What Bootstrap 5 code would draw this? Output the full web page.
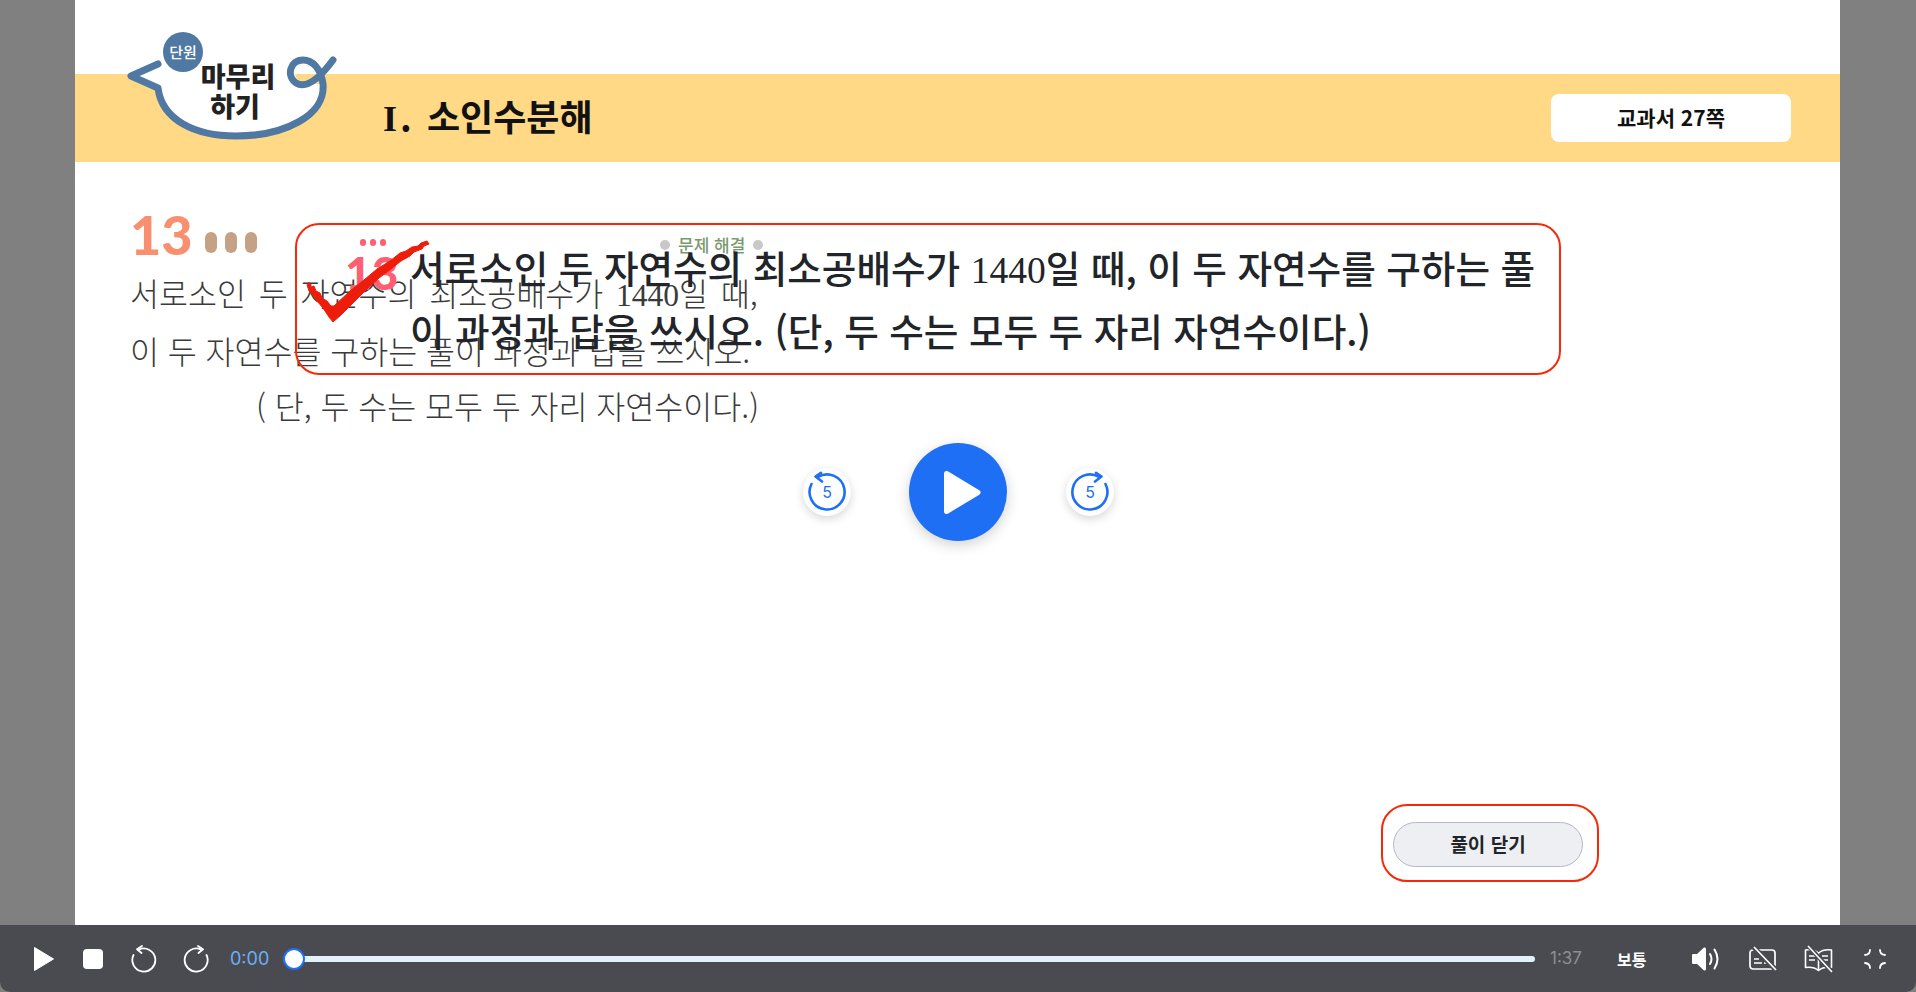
<!DOCTYPE html>
<html lang="ko">
<head>
    <meta charset="UTF-8">
    <meta name="viewport" content="width=device-width, initial-scale=1.0">
    <title>단원 마무리하기</title>
    <link href="https://cdn.jsdelivr.net/npm/bootstrap@5.3.0/dist/css/bootstrap.min.css" rel="stylesheet">
    <style>
        html, body { height: 100%; }
        body {
            background-color: #808080;
            font-family: "Noto Sans CJK KR", "Noto Sans", sans-serif;
            overflow: hidden;
        }
        .player { height: 992px; }
        .slide {
            width: 1765px;
            height: 925px;
            margin-left: 75px;
            background-color: #fff;
            padding-top: 74px;
        }
        .unit-band {
            height: 88px;
            background-color: #ffd985;
            padding-left: 308px;
            padding-right: 49px;
        }
        .unit-title {
            font-size: 36px;
            font-weight: 700;
            color: #111;
            margin: 0;
        }
        .unit-title .roman { font-family: "Liberation Serif", serif; margin-right: -7px; }
        .unit-title .dot-mark { margin-right: 5px; }
        .page-tag {
            width: 240px;
            height: 48px;
            border-radius: 8px;
            background-color: #fff;
            font-size: 21px;
            font-weight: 700;
            color: #111;
        }
        .logo-art { position: absolute; left: 45px; top: 15px; }
        .book-part { padding: 51px 0 0 55px; }
        .book-num {
            font-family: "Lato", sans-serif;
            font-size: 54px;
            font-weight: 900;
            line-height: 44px;
            color: #f89070;
        }
        .book-dot {
            width: 12px;
            height: 21px;
            border-radius: 6px;
            background-color: #c5a285;
        }
        .book-line {
            font-size: 31.5px;
            font-weight: 300;
            color: #3a3a3a;
            line-height: 55px;
            white-space: nowrap;
        }
        .book-lines { margin-top: 8px; }
        .book-line .num { font-family: "Liberation Serif", serif; }
        .book-line.wide { word-spacing: 4px; }
        .book-line.last { padding-left: 126px; }
        .read-box {
            position: absolute;
            left: 220px;
            top: 223px;
            width: 1266px;
            height: 152px;
            border: 2px solid #f5290a;
            border-radius: 24px;
            padding: 12px 0 0 113px;
            font-size: 37.6px;
            font-weight: 500;
            line-height: 59px;
            color: #212529;
            white-space: nowrap;
        }
        .read-box .num { font-family: "Liberation Serif", serif; }
        .mini-num {
            position: absolute;
            left: 270px;
            top: 250px;
            font-family: "Lato", sans-serif;
            font-size: 46px;
            font-weight: 900;
            line-height: 46px;
            color: #ff5f72;
        }
        .mini-dots { position: absolute; left: 285px; top: 239px; }
        .mini-dots i {
            display: block;
            width: 6px;
            height: 7px;
            border-radius: 3px;
            background-color: #ff5f72;
        }
        .skill-tag {
            position: absolute;
            left: 585px;
            top: 232px;
            font-size: 17px;
            font-weight: 500;
            color: #7b9a6c;
        }
        .skill-tag i {
            display: block;
            width: 10px;
            height: 10px;
            border-radius: 50%;
            background-color: #c8c8c8;
        }
        .check-art { position: absolute; left: 225px; top: 235px; }
        .skip-btn {
            position: absolute;
            width: 48px;
            height: 48px;
            top: 468px;
            border-radius: 50%;
            background-color: #fff;
            box-shadow: 0 3px 10px rgba(0,0,0,.16);
        }
        .skip-back { left: 728px; }
        .skip-next { left: 991px; }
        .play-big {
            position: absolute;
            left: 834px;
            top: 443px;
            width: 98px;
            height: 98px;
            padding-left: 8px;
            border-radius: 50%;
            background-color: #1f6ff5;
            box-shadow: 0 4px 14px rgba(0,0,0,.18);
        }
        .close-frame {
            position: absolute;
            left: 1306px;
            top: 804px;
            width: 218px;
            height: 78px;
            padding: 2px 4px 0 0;
            border: 2px solid #f5290a;
            border-radius: 26px;
        }
        .close-solution {
            width: 190px;
            height: 45px;
            padding: 0;
            border: 1px solid #b4b8c5;
            background-color: #eeeff2;
            color: #212529;
            font-size: 19px;
            font-weight: 700;
        }
        .ctrl-bar {
            height: 67px;
            background-color: #4a4b50;
            border-radius: 0 0 10px 10px;
            padding: 0 30px 0 33px;
            color: #fff;
        }
        .time-now { color: #6bb0f5; font-size: 18px; width: 38px; margin-left: 21px; font-family: "Inter", sans-serif; }
        .time-end { color: #8c8f95; font-size: 17px; width: 32px; margin-left: 15px; font-family: "Inter", sans-serif; }
        .seek-wrap { height: 24px; margin-left: 15px; }
        .seek-track { height: 6px; background-color: #e3f1fd; border-radius: 3px; }
        .seek-thumb {
            position: absolute;
            left: 0;
            top: 1px;
            width: 22px;
            height: 22px;
            border-radius: 50%;
            background-color: #fff;
            border: 2px solid #1f6ff5;
        }
        .speed-label { font-size: 16px; font-weight: 700; margin-left: 35px; width: 33px; white-space: nowrap; }
        .ctrl-icon { display: block; }
    </style>
</head>
<body>
    <div class="player d-flex flex-column">
        <div class="slide position-relative">
            <div class="unit-band d-flex align-items-center justify-content-between">
                <h1 class="unit-title"><span class="roman">I</span> <span class="dot-mark">.</span> 소인수분해</h1>
                <div class="page-tag d-flex align-items-center justify-content-center">교과서 27쪽</div>
            </div>

            <!-- speech bubble logo -->
            <svg class="logo-art" width="225" height="130" viewBox="120 15 225 130">
                <path d="M160 65 C200 45 270 45 300 62 C290 72 296 84 308 84 L322 84 C325 115 285 137 236 137 C195 137 162 120 158 90 L132 77 Z" fill="#fff"/>
                <path d="M158 64 L131 76 L158 88 C162 120 195 136 236 136 C285 136 326 115 323 84 C321 68 312 60 303 60 C290 60 286 76 296 83 C308 90 322 75 333 60" fill="none" stroke="#4f78a3" stroke-width="7" stroke-linecap="round" stroke-linejoin="round"/>
                <circle cx="183" cy="52" r="20" fill="#4f78a3"/>
                <text x="183" y="58" text-anchor="middle" font-size="15" font-weight="500" fill="#fff" font-family="Noto Sans CJK KR, sans-serif">단원</text>
                <text x="238" y="87" text-anchor="middle" font-size="27" font-weight="900" fill="#222" font-family="Noto Sans CJK KR, sans-serif">마무리</text>
                <text x="235" y="117" text-anchor="middle" font-size="27" font-weight="900" fill="#222" font-family="Noto Sans CJK KR, sans-serif">하기</text>
            </svg>

            <div class="book-part">
                <div class="d-flex align-items-end gap-1">
                    <span class="book-num">13</span>
                    <span class="d-flex gap-2 ms-2 mb-1">
                        <span class="book-dot"></span>
                        <span class="book-dot"></span>
                        <span class="book-dot"></span>
                    </span>
                </div>
                <div class="book-lines">
                    <div class="book-line wide">서로소인 두 자연수의 최소공배수가 <span class="num">1440</span>일 때,</div>
                    <div class="book-line">이 두 자연수를 구하는 풀이 과정과 답을 쓰시오.</div>
                    <div class="book-line last">( 단, 두 수는 모두 두 자리 자연수이다.)</div>
                </div>
            </div>

            <div class="mini-dots d-flex gap-1"><i></i><i></i><i></i></div>
            <div class="mini-num">13</div>
            <div class="skill-tag d-flex align-items-center gap-2"><i></i>문제 해결<i></i></div>
            <div class="read-box">
                서로소인 두 자연수의 최소공배수가 <span class="num">1440</span>일 때, 이 두 자연수를 구하는 풀<br>
                이 과정과 답을 쓰시오. (단, 두 수는 모두 두 자리 자연수이다.)
            </div>

            <!-- rough hand drawn check -->
            <svg class="check-art" width="210" height="95" viewBox="0 0 210 95">
                <path d="M7 50 L9 47 L11 52 L14 51 L16 56 L20 58 L22 63 L27 66 L31 71 L34 71 L50 56 L64 45 L77 34 L90 26 L100 18 L106 16 L112 12 L118 11 L121 8 L127 6 L129 9 L124 11 L122 14 L114 17 L110 21 L101 26 L91 34 L79 43 L67 54 L54 67 L41 80 L33 87 L29 82 L23 73 L17 66 L13 60 L9 56 Z" fill="#ee1c0a" stroke="#ee1c0a"/>
            </svg>

            <div class="skip-btn skip-back d-flex align-items-center justify-content-center">
                <svg width="40" height="42" viewBox="-1 -1 40 42">
                    <path d="M10 5 A17.5 17.5 0 1 1 3.5 12" fill="none" stroke="#1f6ff5" stroke-width="2.6" stroke-linecap="round"/>
                    <path d="M13 0.8 L7.5 4.5 L14 9.5" fill="none" stroke="#1f6ff5" stroke-width="2.6" stroke-linecap="round" stroke-linejoin="round"/>
                    <text x="19" y="26" text-anchor="middle" font-size="16" fill="#1f6ff5" font-family="Inter, sans-serif">5</text>
                </svg>
            </div>
            <div class="play-big d-flex align-items-center justify-content-center">
                <svg width="38" height="45" viewBox="0 0 38 45"><path d="M3.5 3.5 L35 22.5 L3.5 41.5 Z" fill="#fff" stroke="#fff" stroke-width="5" stroke-linejoin="round"/></svg>
            </div>
            <div class="skip-btn skip-next d-flex align-items-center justify-content-center">
                <svg width="40" height="42" viewBox="-1 -1 40 42">
                    <path d="M28 5 A17.5 17.5 0 1 0 34.5 12" fill="none" stroke="#1f6ff5" stroke-width="2.6" stroke-linecap="round"/>
                    <path d="M25 0.8 L30.5 4.5 L24 9.5" fill="none" stroke="#1f6ff5" stroke-width="2.6" stroke-linecap="round" stroke-linejoin="round"/>
                    <text x="19" y="26" text-anchor="middle" font-size="16" fill="#1f6ff5" font-family="Inter, sans-serif">5</text>
                </svg>
            </div>

            <div class="close-frame d-flex align-items-center justify-content-center">
                <button type="button" class="btn close-solution rounded-pill">풀이 닫기</button>
            </div>
        </div>

        <div class="ctrl-bar d-flex align-items-center">
            <svg class="ctrl-icon" width="22" height="26" viewBox="0 0 22 26"><path d="M1.5 1.5 L20.5 13 L1.5 24.5 Z" fill="#fff" stroke="#fff" stroke-linejoin="round"/></svg>
            <svg class="ctrl-icon" style="margin-left:28px" width="20" height="20" viewBox="0 0 20 20"><rect width="20" height="20" rx="4" fill="#fff"/></svg>
            <svg class="ctrl-icon" style="margin-left:28px" width="26" height="28" viewBox="0 0 26 28"><path d="M8 4.6 A11.5 11.5 0 1 1 2.5 10" fill="none" stroke="#fff" stroke-width="1.8" stroke-linecap="round"/><path d="M11 1 L6 4.2 L10.5 8" fill="none" stroke="#fff" stroke-width="1.8" stroke-linecap="round" stroke-linejoin="round"/></svg>
            <svg class="ctrl-icon" style="margin-left:26px" width="26" height="28" viewBox="0 0 26 28"><path d="M18 4.6 A11.5 11.5 0 1 0 23.5 10" fill="none" stroke="#fff" stroke-width="1.8" stroke-linecap="round"/><path d="M15 1 L20 4.2 L15.5 8" fill="none" stroke="#fff" stroke-width="1.8" stroke-linecap="round" stroke-linejoin="round"/></svg>
            <span class="time-now">0:00</span>
            <div class="seek-wrap position-relative flex-grow-1 d-flex align-items-center">
                <div class="seek-track w-100"></div>
                <div class="seek-thumb"></div>
            </div>
            <span class="time-end">1:37</span>
            <span class="speed-label">보통</span>
            <svg class="ctrl-icon" style="margin-left:41px" width="29" height="26" viewBox="0 0 29 26"><path d="M1 9 Q1 8 2 8 L6 8 L13 1.5 Q15 1 15 3 L15 23 Q15 25 13 24.5 L6 18 L2 18 Q1 18 1 17 Z" fill="#fff"/><path d="M19 8 Q22 13 19 18" fill="none" stroke="#fff" stroke-width="2" stroke-linecap="round"/><path d="M23.5 3.5 Q29.5 13 23.5 22.5" fill="none" stroke="#fff" stroke-width="2" stroke-linecap="round"/></svg>
            <svg class="ctrl-icon" style="margin-left:29px" width="28" height="26" viewBox="0 0 28 26"><rect x="1" y="4" width="25" height="19" rx="3" fill="none" stroke="#fff" stroke-width="1.7"/><path d="M5 13 H10 M5 17 H13 M15 17 H18" stroke="#fff" stroke-width="1.6"/><path d="M4 0.5 L27 24" stroke="#4a4b50" stroke-width="5"/><path d="M5 1 L27 24" stroke="#fff" stroke-width="1.7"/></svg>
            <svg class="ctrl-icon" style="margin-left:27px" width="29" height="28" viewBox="0 0 29 28"><path d="M14.5 8 C11 5 6 4.5 1.5 5 V22.5 C6 22 11 22.5 14.5 25.5 C18 22.5 23 22 27.5 22.5 V5 C23 4.5 18 5 14.5 8 Z M14.5 8 V25.5" fill="none" stroke="#fff" stroke-width="1.6" stroke-linejoin="round"/><path d="M5 11 H11 M5 15 H11 M18 11 H24 M18 15 H24" stroke="#fff" stroke-width="1.4"/><path d="M4 0.5 L28 27" stroke="#4a4b50" stroke-width="4.5"/><path d="M4 1 L28 27" stroke="#fff" stroke-width="1.6"/></svg>
            <svg class="ctrl-icon" style="margin-left:31px" width="22" height="20" viewBox="0 0 22 20"><path d="M6 1 Q6 5.5 1 6 M16 1 Q16 5.5 21 6 M6 19 Q6 14.5 1 14 M16 19 Q16 14.5 21 14" fill="none" stroke="#fff" stroke-width="1.8" stroke-linecap="round"/></svg>
        </div>
    </div>
    <script src="https://cdn.jsdelivr.net/npm/bootstrap@5.3.0/dist/js/bootstrap.bundle.min.js"></script>
</body>
</html>
